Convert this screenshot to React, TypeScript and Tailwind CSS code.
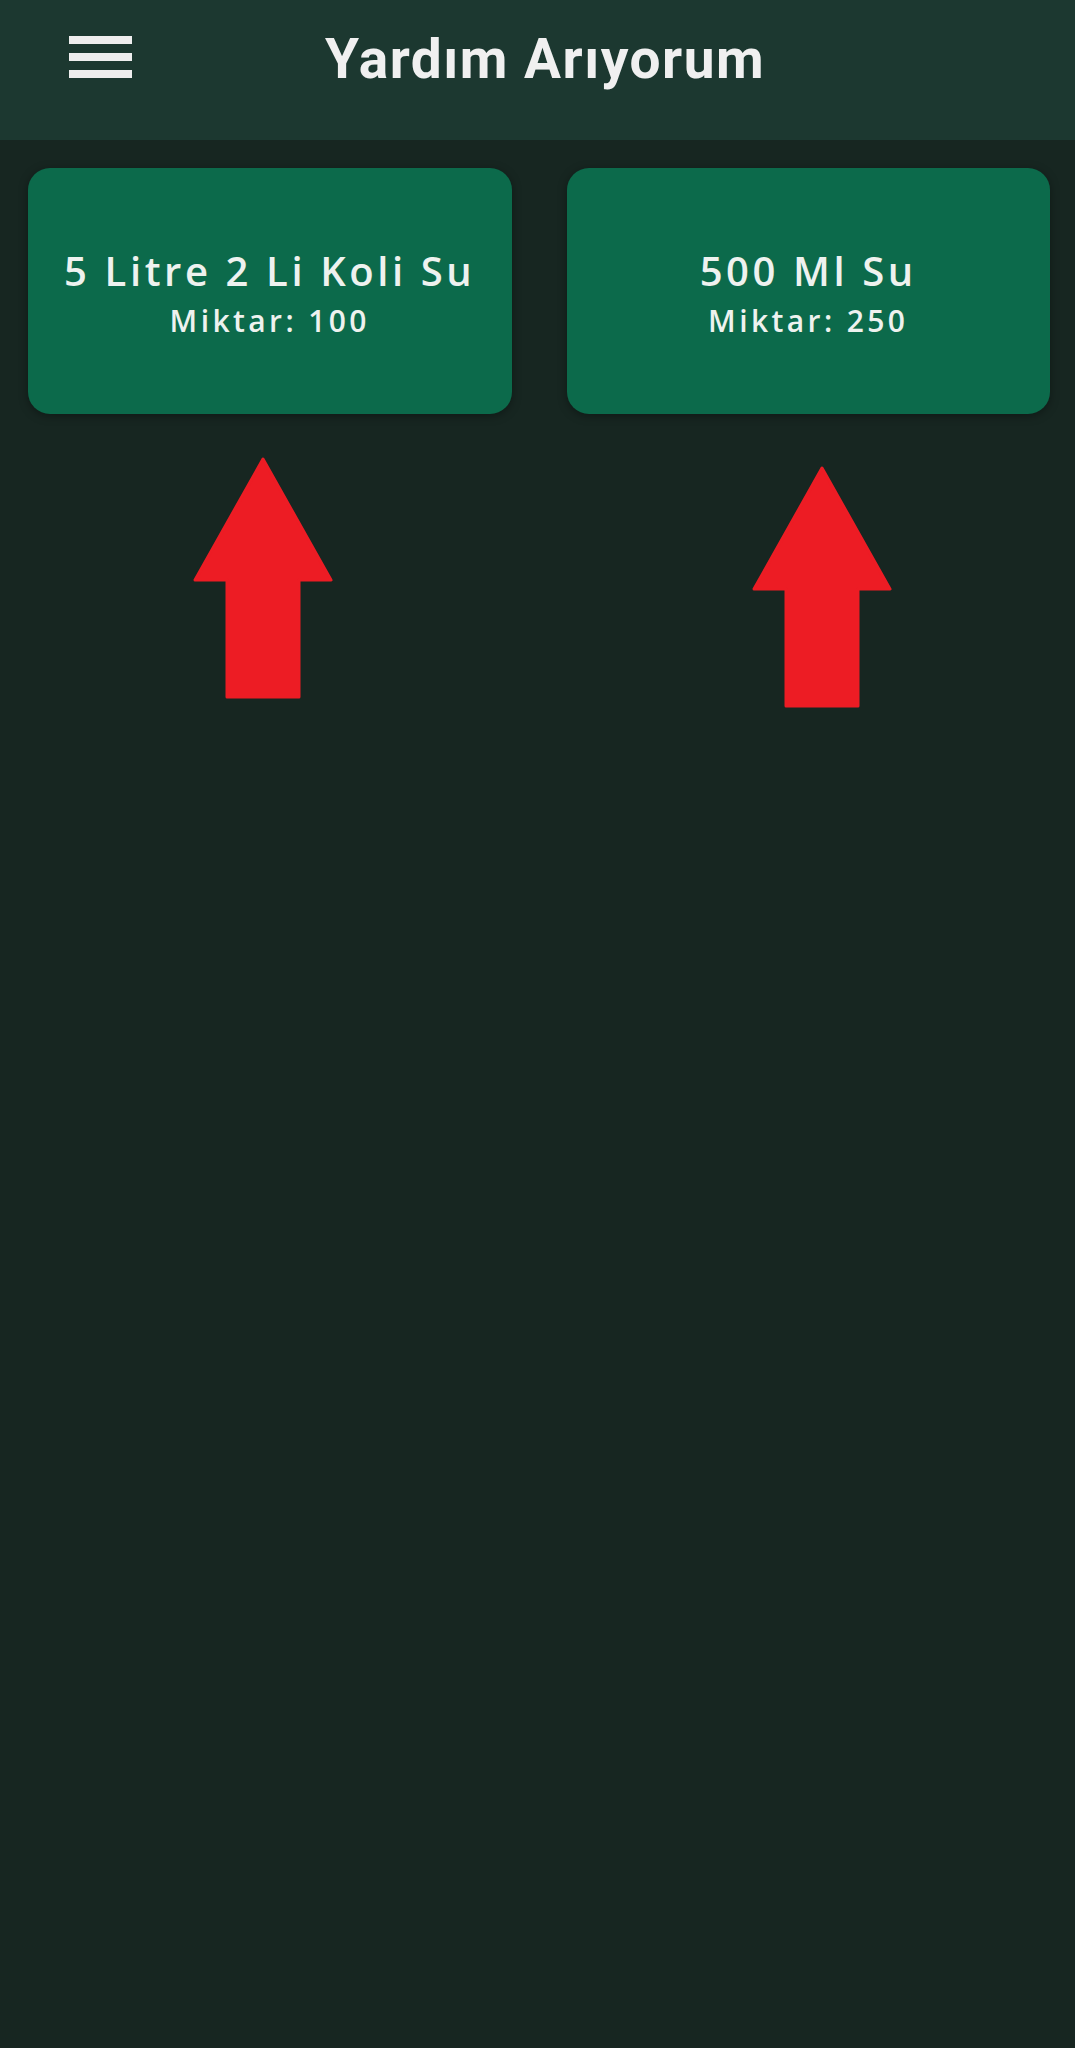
import React from 'react'

interface Need {
  name: string
  amount: number
}

const needs: Need[] = [
  { name: '5 Litre 2 Li Koli Su', amount: 100 },
  { name: '500 Ml Su', amount: 250 },
]

function UpArrow() {
  return (
    <svg width="141" height="242" viewBox="0 0 141 242" className="block">
      <path
        d="M70 2 L138 123 L106 123 L106 240 L34 240 L34 123 L2 123 Z"
        fill="#ed1c24"
        stroke="#ed1c24"
        strokeWidth="3"
        strokeLinejoin="round"
      />
    </svg>
  )
}

function NeedCard({ need }: { need: Need }) {
  return (
    <div className="h-[246px] rounded-[22px] bg-[#0c6a4b] shadow-[0_2px_10px_rgba(0,0,0,0.35)] flex flex-col items-center justify-center text-[#eef2ef] pt-[5px]">
      <p className="text-[40px] leading-[46px] font-semibold tracking-[3.6px] whitespace-nowrap">{need.name}</p>
      <p className="text-[30px] leading-[36px] font-semibold tracking-[3.4px] mt-[9px]">
        Miktar: {need.amount}
      </p>
    </div>
  )
}

export default function App() {
  return (
    <div
      className="min-h-[2048px] w-full bg-[#172621]"
      style={{ fontFamily: '"Open Sans", "Noto Sans", sans-serif' }}
    >
      <header className="h-[140px] bg-[#1c3830] flex items-start pt-[36px] pl-[69px] pr-[117px]">
        <button className="w-[63px] h-[42px] flex flex-col justify-between py-0">
          <span className="block h-[8px] w-full bg-[#eeeeee]" />
          <span className="block h-[8px] w-full bg-[#eeeeee]" />
          <span className="block h-[8px] w-full bg-[#eeeeee]" />
        </button>
        <h1
          className="flex-1 text-center text-[55px] leading-[46px] font-bold text-[#f0f0f0] tracking-[1.5px]"
          style={{ fontFamily: 'Roboto, "Liberation Sans", sans-serif' }}
        >
          Yardım Arıyorum
        </h1>
      </header>

      <main className="grid grid-cols-2 gap-[55px] pl-[28px] pr-[25px] pt-[28px]">
        {needs.map((need) => (
          <NeedCard key={need.name} need={need} />
        ))}
      </main>

      <div className="flex items-start">
        <div className="ml-[193px] mt-[43px]">
          <UpArrow />
        </div>
        <div className="ml-[418px] mt-[52px]">
          <UpArrow />
        </div>
      </div>
    </div>
  )
}
